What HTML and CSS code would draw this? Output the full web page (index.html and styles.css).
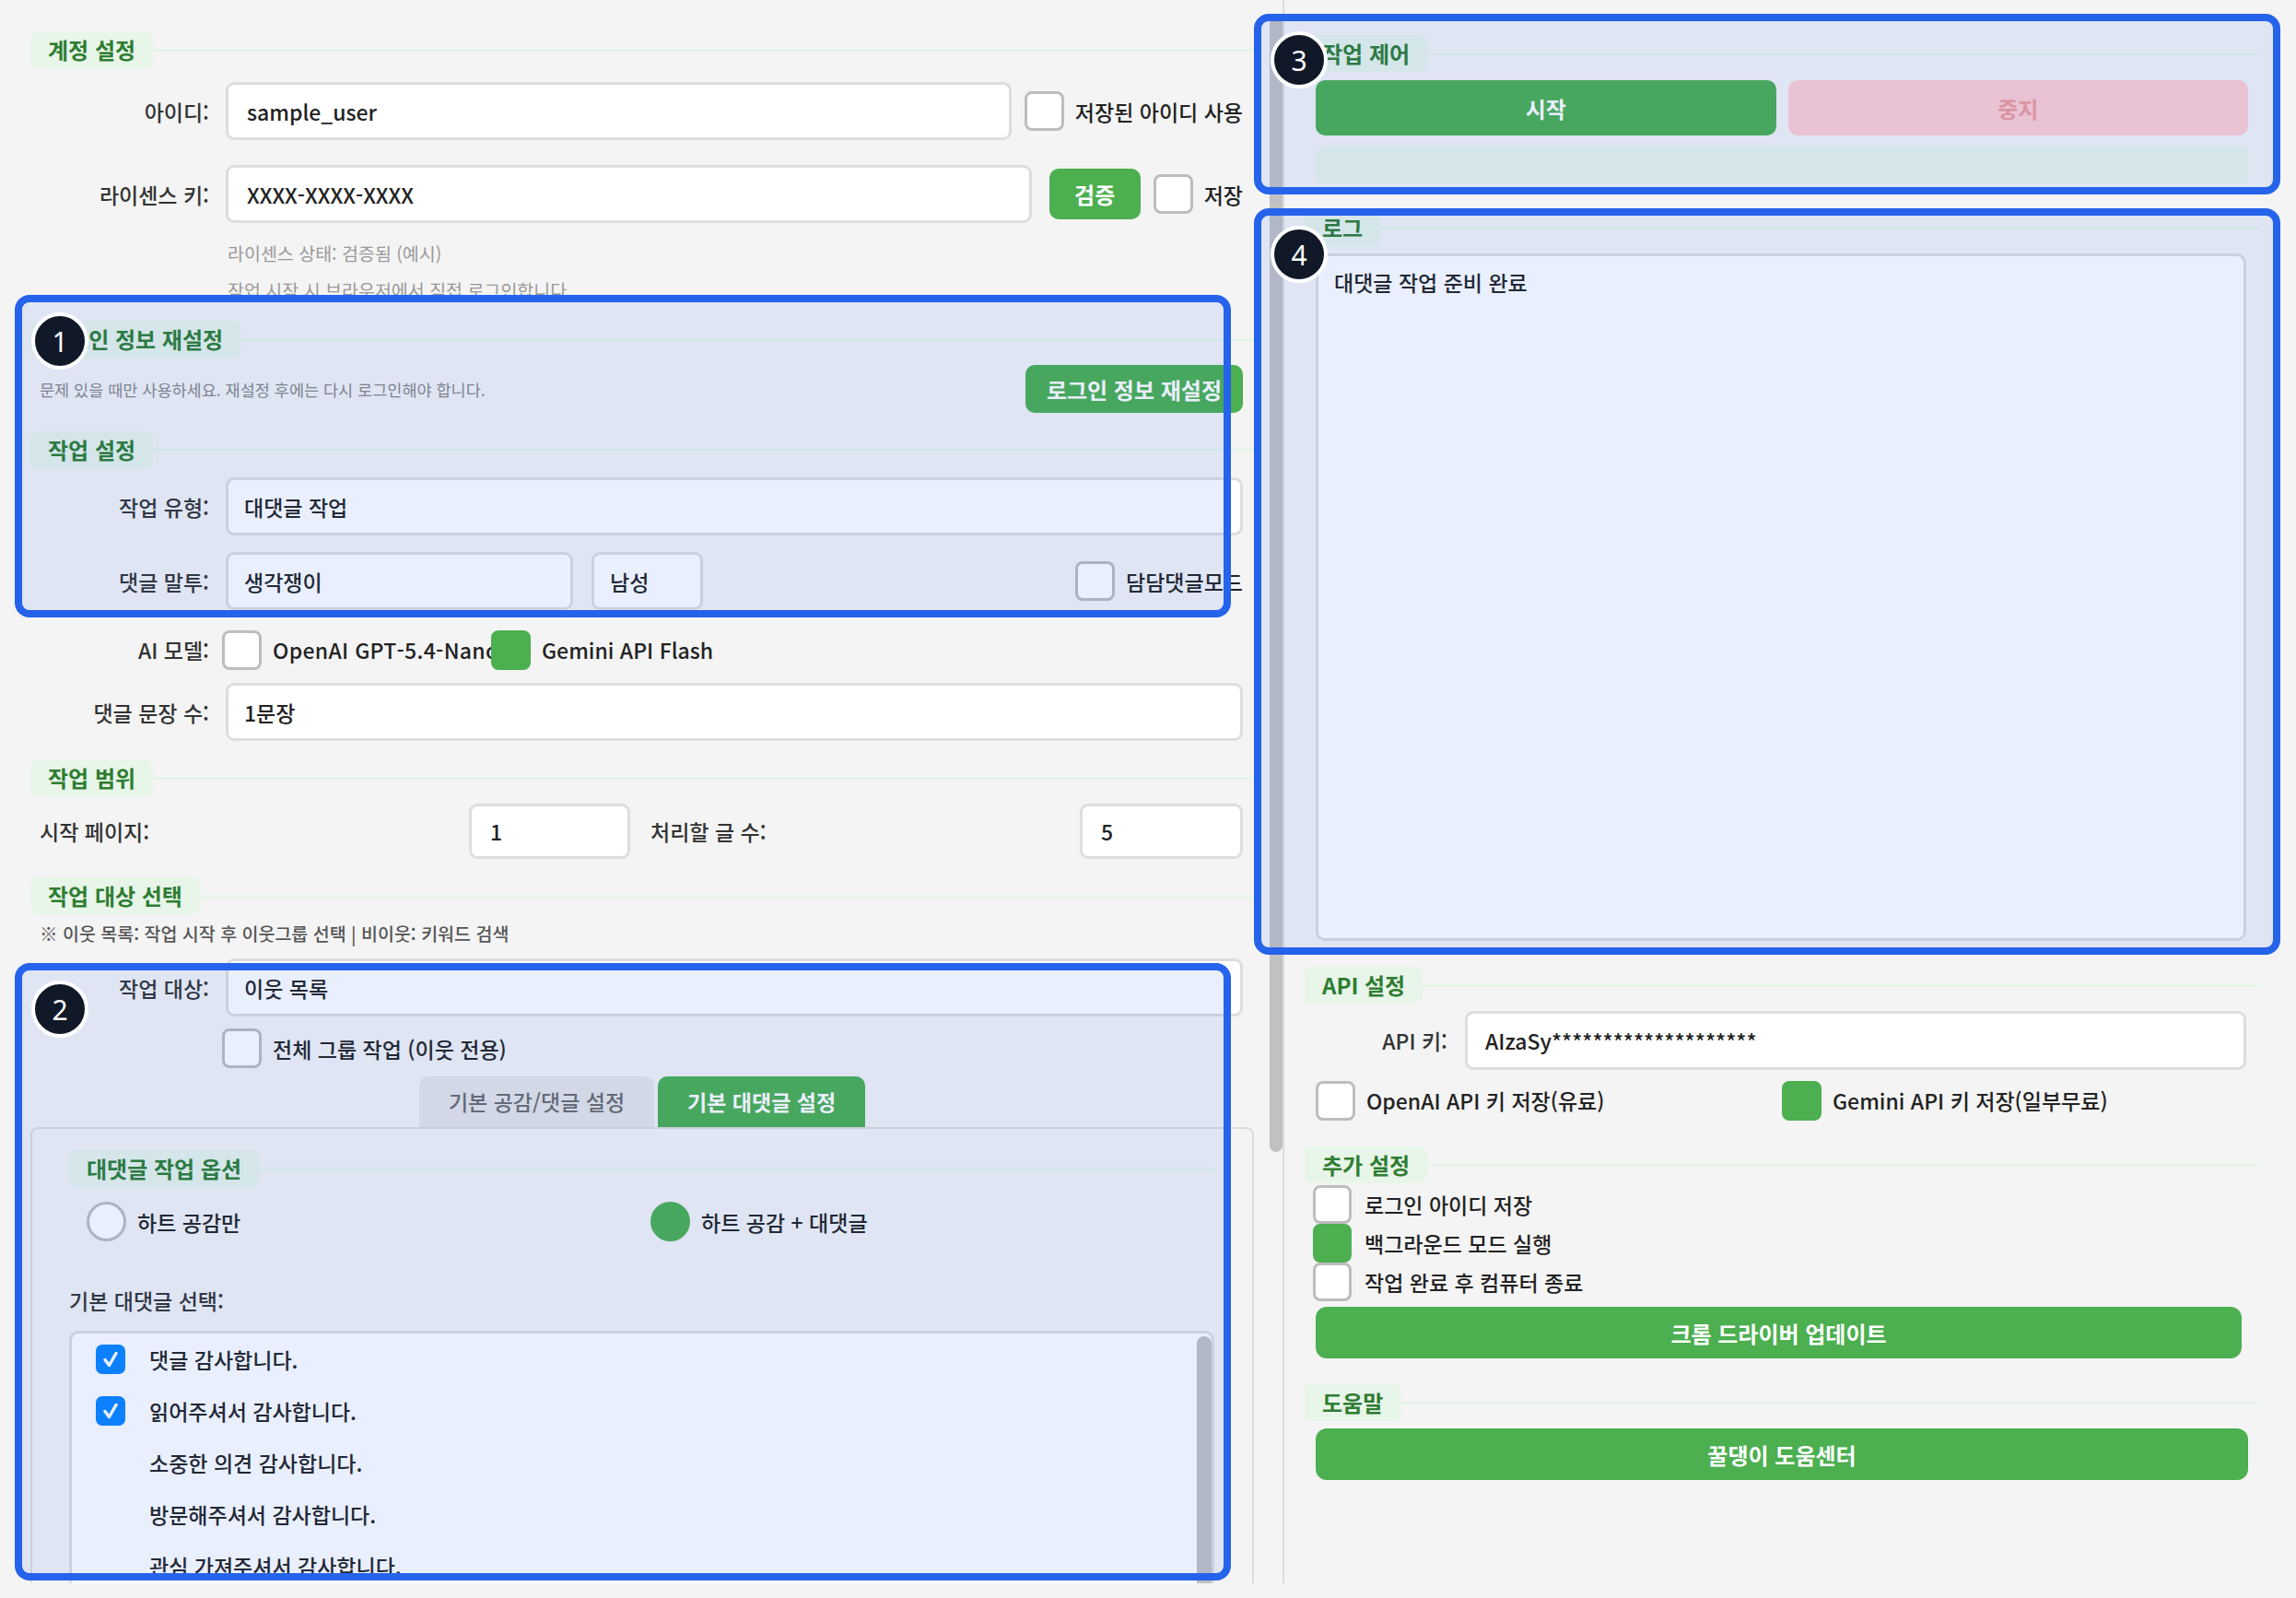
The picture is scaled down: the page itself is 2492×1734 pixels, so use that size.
FILE: index.html
```html
<!DOCTYPE html>
<html lang="ko">
<head>
    <meta charset="UTF-8">
    <meta name="viewport" content="width=device-width, initial-scale=1.0">
    <title>꿀댕이 - 대댓글 작업</title>
    <link rel="stylesheet" href="styles.css">
</head>
<body>
<div class="app">
    <div class="left-pane">
        <div class="left-content">
            <div class="section-title"><span>계정 설정</span></div>
            <div class="form-row row-id">
                <label class="row-label">아이디:</label>
                <input class="text-field" type="text" value="sample_user">
                <label class="check-label"><input type="checkbox"> 저장된 아이디 사용</label>
            </div>
            <div class="form-row row-license">
                <label class="row-label">라이센스 키:</label>
                <input class="text-field" type="text" value="XXXX-XXXX-XXXX">
                <button class="btn verify-btn">검증</button>
                <label class="check-label"><input type="checkbox"> 저장</label>
            </div>
            <div class="hint">
                라이센스 상태: 검증됨 (예시)<br>
                작업 시작 시 브라우저에서 직접 로그인합니다.
            </div>

            <div class="section-title title-tight"><span>로그인 정보 재설정</span></div>
            <div class="reset-row">
                <p>문제 있을 때만 사용하세요. 재설정 후에는 다시 로그인해야 합니다.</p>
                <button class="btn">로그인 정보 재설정</button>
            </div>

            <div class="section-title"><span>작업 설정</span></div>
            <div class="form-row after-title">
                <label class="row-label">작업 유형:</label>
                <div class="combo wide">대댓글 작업</div>
            </div>
            <div class="form-row">
                <label class="row-label">댓글 말투:</label>
                <div class="combo tone">생각쟁이</div>
                <div class="combo gender">남성</div>
                <label class="check-label push-right"><input type="checkbox"> 담담댓글모드</label>
            </div>
            <div class="form-row ai-row">
                <label class="row-label">AI 모델:</label>
                <label class="ai-option"><input type="checkbox"> OpenAI GPT-5.4-Nano</label>
                <label class="ai-option"><input type="checkbox" checked> Gemini API Flash</label>
            </div>
            <div class="form-row sentence-row">
                <label class="row-label">댓글 문장 수:</label>
                <div class="combo wide">1문장</div>
            </div>

            <div class="section-title"><span>작업 범위</span></div>
            <div class="range-row">
                <label>시작 페이지:</label>
                <input class="text-field" type="text" value="1">
                <label>처리할 글 수:</label>
                <input class="text-field" type="text" value="5">
            </div>

            <div class="section-title"><span>작업 대상 선택</span></div>
            <p class="note">※ 이웃 목록: 작업 시작 후 이웃그룹 선택 | 비이웃: 키워드 검색</p>
            <div class="form-row target-row">
                <label class="row-label">작업 대상:</label>
                <div class="combo wide">이웃 목록</div>
            </div>
            <div class="group-row">
                <label class="check-label"><input type="checkbox"> 전체 그룹 작업 (이웃 전용)</label>
            </div>

            <div class="tabs">
                <div class="tab">기본 공감/댓글 설정</div>
                <div class="tab active">기본 대댓글 설정</div>
            </div>
            <div class="tab-panel">
                <div class="section-title"><span>대댓글 작업 옵션</span></div>
                <div class="radio-row">
                    <label class="check-label"><input type="radio" name="mode"> 하트 공감만</label>
                    <label class="check-label"><input type="radio" name="mode" checked> 하트 공감 + 대댓글</label>
                </div>
                <p class="sub-label">기본 대댓글 선택:</p>
                <div class="reply-list">
                    <div class="reply-items">
                        <div class="reply-item"><span class="tick on"><svg viewBox="0 0 32 32"><path d="M10 16.5l4.5 6L22 9.5"/></svg></span>댓글 감사합니다.</div>
                        <div class="reply-item"><span class="tick on"><svg viewBox="0 0 32 32"><path d="M10 16.5l4.5 6L22 9.5"/></svg></span>읽어주셔서 감사합니다.</div>
                        <div class="reply-item"><span class="tick"></span>소중한 의견 감사합니다.</div>
                        <div class="reply-item"><span class="tick"></span>방문해주셔서 감사합니다.</div>
                        <div class="reply-item"><span class="tick"></span>관심 가져주셔서 감사합니다.</div>
                        <div class="reply-item"><span class="tick"></span>좋은 하루 보내세요.</div>
                    </div>
                    <div class="reply-scroll"></div>
                </div>
            </div>
        </div>
        <div class="scrollbar"><div class="scrollbar-thumb"></div></div>
    </div>

    <div class="right-pane">
        <div class="section-title"><span>작업 제어</span></div>
        <div class="control-buttons">
            <button class="btn">시작</button>
            <button class="btn stop-btn">중지</button>
        </div>
        <div class="progress"></div>

        <div class="section-title"><span>로그</span></div>
        <div class="log-box">대댓글 작업 준비 완료</div>

        <div class="section-title"><span>API 설정</span></div>
        <div class="api-row">
            <label class="api-label">API 키:</label>
            <input class="text-field" type="text" value="AIzaSy********************">
        </div>
        <div class="api-checks">
            <label class="check-label"><input type="checkbox"> OpenAI API 키 저장(유료)</label>
            <label class="check-label"><input type="checkbox" checked> Gemini API 키 저장(일부무료)</label>
        </div>

        <div class="section-title"><span>추가 설정</span></div>
        <div class="extra-checks">
            <label class="check-label"><input type="checkbox"> 로그인 아이디 저장</label>
            <label class="check-label"><input type="checkbox" checked> 백그라운드 모드 실행</label>
            <label class="check-label"><input type="checkbox"> 작업 완료 후 컴퓨터 종료</label>
        </div>
        <button class="btn wide-btn driver-btn">크롬 드라이버 업데이트</button>

        <div class="section-title"><span>도움말</span></div>
        <button class="btn wide-btn">꿀댕이 도움센터</button>
    </div>

    <!-- 설명용 표시 영역 -->
    <div class="callout callout-1"><span class="badge">1</span></div>
    <div class="callout callout-2"><span class="badge">2</span></div>
    <div class="callout callout-3"><span class="badge">3</span></div>
    <div class="callout callout-4"><span class="badge">4</span></div>
</div>
</body>
</html>
```

FILE: styles.css
```css
* {
    box-sizing: border-box;
}
body {
    margin: 0;
    background: #f4f4f4;
    font-family: "Noto Sans CJK KR", "Noto Sans", sans-serif;
    font-size: 23px;
    font-weight: 500;
    color: #222;
}
p {
    margin: 0;
}
.app {
    position: relative;
    display: flex;
    height: 1718px;
}

/* 왼쪽 설정 영역 */
.left-pane {
    display: flex;
    width: 1394px;
    flex-shrink: 0;
}
.left-content {
    flex: 1;
    padding: 34px 17px 0 33px;
    overflow: hidden;
}
.scrollbar {
    width: 16px;
    padding-top: 16px;
    border-right: 2px solid #dcdcdc;
}
.scrollbar-thumb {
    height: 1234px;
    background: #c1c1c1;
    border-radius: 7px;
}

/* 섹션 제목 */
.section-title {
    display: flex;
    align-items: center;
    height: 40px;
    margin-top: 20px;
}
.section-title:first-child {
    margin-top: 0;
}
.section-title span {
    background: #e8f5e9;
    color: #2e7d32;
    font-weight: 700;
    font-size: 24px;
    line-height: 40px;
    padding: 0 19px;
    border-radius: 8px;
    white-space: nowrap;
}
.section-title::after {
    content: "";
    flex: 1;
    height: 3px;
    background: #e8f5e9;
}
.title-tight {
    margin-top: 13px;
}

/* 입력 행 */
.form-row {
    display: flex;
    align-items: center;
    margin: 18px 12px 0 0;
}
.row-label {
    width: 194px;
    flex-shrink: 0;
    margin-right: 18px;
    text-align: right;
    color: #333;
}
.text-field {
    flex: 1;
    min-width: 0;
    height: 63px;
    padding: 0 20px;
    border: 3px solid #ddd;
    border-radius: 9px;
    background: #fff;
    font: inherit;
    color: #222;
}
.combo {
    display: flex;
    align-items: center;
    height: 63px;
    padding: 0 17px;
    border: 3px solid #ddd;
    border-radius: 9px;
    background: #fff;
}
.combo.wide {
    flex: 1;
}
.combo.tone {
    width: 377px;
}
.combo.gender {
    width: 121px;
    margin-left: 20px;
}
.row-id {
    margin-top: 15px;
}
.row-license {
    margin-top: 27px;
}
.after-title {
    margin-top: 10px;
}
.ai-row {
    height: 44px;
    margin-top: 21px;
}
.ai-row .row-label {
    margin-right: 14px;
}
.sentence-row {
    margin-top: 14px;
}
.target-row {
    margin-top: 12px;
}

/* 체크박스, 라디오 */
input[type="checkbox"],
input[type="radio"] {
    appearance: none;
    -webkit-appearance: none;
    flex-shrink: 0;
    width: 43px;
    height: 43px;
    margin: 0;
    border: 3px solid #bdbdbd;
    border-radius: 8px;
    background: #fff;
}
input[type="radio"] {
    border-radius: 50%;
}
input[type="checkbox"]:checked,
input[type="radio"]:checked {
    background: #4caf50;
    border-color: #4caf50;
}
.check-label {
    display: flex;
    align-items: center;
    gap: 12px;
    margin-left: 14px;
    white-space: nowrap;
}
.push-right {
    margin-left: auto;
}
.ai-option {
    display: flex;
    align-items: center;
    gap: 12px;
    width: 292px;
    overflow: hidden;
    white-space: nowrap;
    letter-spacing: 0.3px;
}
.ai-option:last-child {
    width: auto;
    letter-spacing: 0;
}
.group-row {
    display: flex;
    margin: 13px 0 0 194px;
}

/* 버튼 */
.btn {
    border: none;
    border-radius: 10px;
    background: #4caf50;
    color: #fff;
    font: inherit;
    font-size: 24px;
    font-weight: 700;
    cursor: pointer;
}
.verify-btn {
    width: 99px;
    height: 55px;
    margin-left: 19px;
}
.stop-btn {
    background: #ffcdd2;
    color: #ef9a9a;
}

.hint {
    margin: 13px 0 0 214px;
    color: #999;
    font-size: 19.5px;
    font-weight: 400;
    line-height: 40px;
}
.reset-row {
    display: flex;
    align-items: center;
    justify-content: space-between;
    margin: 8px 12px 0 10px;
}
.reset-row p {
    font-size: 17.5px;
    font-weight: 400;
    color: #888;
}
.reset-row .btn {
    height: 52px;
    padding: 0 23px;
}

.range-row {
    display: grid;
    grid-template-columns: 1fr 175px 1fr 177px;
    column-gap: 22px;
    align-items: center;
    margin: 8px 12px 0 10px;
}
.range-row .text-field {
    height: 60px;
}
.range-row label {
    color: #333;
}
.note {
    margin: 6px 0 0 10px;
    font-size: 19.5px;
    line-height: 30px;
    color: #555;
}

/* 탭 */
.tabs {
    display: flex;
    justify-content: center;
    gap: 4px;
    margin-top: 9px;
}
.tab {
    height: 55px;
    line-height: 55px;
    padding: 0 32px;
    border-radius: 10px 10px 0 0;
    background: #e6e6e6;
    color: #6b6b6b;
}
.tab.active {
    background: #4caf50;
    color: #fff;
    font-weight: 700;
}
.tab-panel {
    padding: 23px 41px 0 40px;
    border: 2px solid #dcdcdc;
    border-radius: 8px;
}
.radio-row {
    display: grid;
    grid-template-columns: 1fr 1fr;
    margin-top: 16px;
    padding-left: 19px;
}
.radio-row .check-label {
    margin-left: 0;
}
.sub-label {
    margin-top: 49px;
    line-height: 30px;
    color: #333;
}
.reply-list {
    display: flex;
    margin-top: 18px;
    border: 3px solid #ddd;
    border-radius: 10px;
    background: #fff;
}
.reply-items {
    flex: 1;
}
.reply-item {
    display: flex;
    align-items: center;
    gap: 26px;
    height: 56px;
    padding-left: 26px;
}
.tick {
    width: 32px;
    height: 32px;
    border-radius: 7px;
}
.tick.on {
    background: #0a84ff;
}
.tick svg {
    display: block;
    width: 32px;
    height: 32px;
    fill: none;
    stroke: #fff;
    stroke-width: 3.5;
    stroke-linecap: round;
    stroke-linejoin: round;
}
.reply-scroll {
    width: 16px;
    margin-top: 3px;
    background: #c1c1c1;
    border-radius: 8px 8px 0 0;
}

/* 오른쪽 영역 */
.right-pane {
    flex: 1;
    padding: 38px 39px 0 22px;
}
.right-pane .section-title {
    margin-top: 28px;
}
.right-pane .section-title:first-child {
    margin-top: 0;
}
.control-buttons {
    display: grid;
    grid-template-columns: 1fr 1fr;
    gap: 13px;
    margin: 9px 13px 0 12px;
}
.control-buttons .btn {
    height: 60px;
}
.progress {
    height: 40px;
    margin: 12px 13px 0 12px;
    border-radius: 8px;
    background: #e8f5e9;
}
.log-box {
    height: 746px;
    margin: 8px 15px 0 12px;
    padding: 13px 17px;
    border: 3px solid #ddd;
    border-radius: 10px;
    background: #fff;
    line-height: 30px;
}
.api-row {
    display: flex;
    align-items: center;
    margin: 8px 15px 0 12px;
}
.api-label {
    width: 143px;
    margin-right: 19px;
    text-align: right;
    color: #333;
}
.api-row .text-field {
    height: 64px;
    padding: 0 19px;
}
.api-checks {
    display: grid;
    grid-template-columns: 1fr 1fr;
    align-items: center;
    height: 44px;
    margin: 11px 13px 0 12px;
}
.api-checks .check-label {
    margin-left: 0;
}
.extra-checks {
    margin: 2px 0 0 9px;
}
.extra-checks .check-label {
    height: 42px;
    gap: 14px;
    margin-left: 0;
}
.extra-checks input[type="checkbox"] {
    width: 42px;
    height: 42px;
}
.wide-btn {
    display: block;
    width: calc(100% - 25px);
    height: 56px;
    margin: 8px 13px 0 12px;
    border-radius: 12px;
    font-weight: 600;
}
.driver-btn {
    margin-top: 6px;
    width: calc(100% - 32px);
}

/* 번호 표시 */
.callout {
    position: absolute;
    border: 8px solid #2563eb;
    border-radius: 16px;
    background: rgba(37, 99, 235, 0.1);
    pointer-events: none;
}
.callout-1 {
    left: 16px;
    top: 320px;
    width: 1320px;
    height: 350px;
}
.callout-2 {
    left: 16px;
    top: 1045px;
    width: 1320px;
    height: 670px;
}
.callout-3 {
    left: 1361px;
    top: 15px;
    width: 1114px;
    height: 196px;
}
.callout-4 {
    left: 1361px;
    top: 226px;
    width: 1114px;
    height: 810px;
}
.badge {
    position: absolute;
    left: 10px;
    top: 11px;
    display: flex;
    align-items: center;
    justify-content: center;
    width: 62px;
    height: 62px;
    border: 4px solid #fff;
    border-radius: 50%;
    background: #111827;
    color: #fff;
    font-family: "Noto Sans", sans-serif;
    font-size: 30px;
    font-weight: 400;
}
```
